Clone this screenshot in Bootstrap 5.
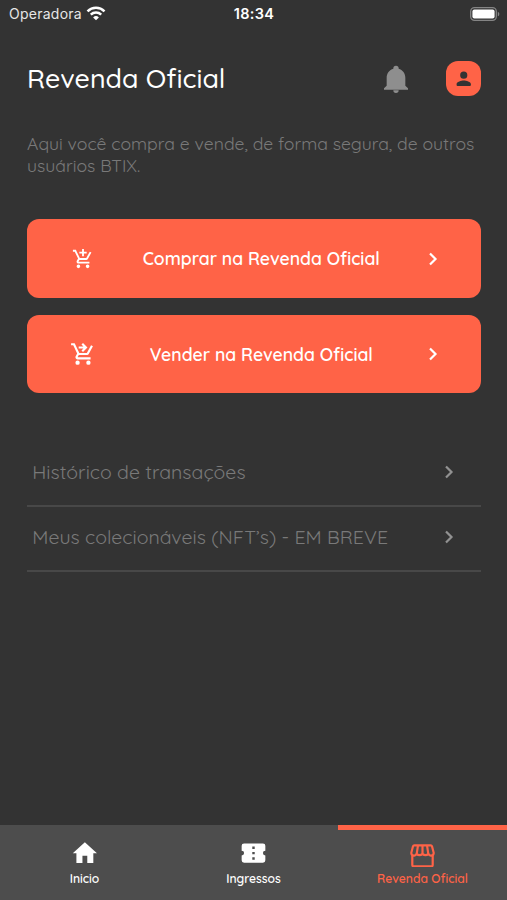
<!DOCTYPE html>
<html lang="pt-BR" data-bs-theme="dark">
<head>
<meta charset="utf-8">
<meta name="viewport" content="width=device-width, initial-scale=1">
<title>Revenda Oficial</title>
<link href="https://cdn.jsdelivr.net/npm/bootstrap@5.3.0/dist/css/bootstrap.min.css" rel="stylesheet">
<style>
  :root { --coral: #ff6347; --ink: #333333; }
  body { background: var(--ink); font-family: Quicksand, Lato, sans-serif; color: #fff; }
  svg { display: block; flex: none; }
  .app { height: 900px; overflow: hidden; }
  .status { display: grid; grid-template-columns: 1fr auto 1fr; height: 27px; padding: 0 7px 0 9px; font-family: Inter, sans-serif; font-size: 14px; color: #e6e6e6; }
  .status .carrier { letter-spacing: .25px; }
  .status .clock { font-size: 14.5px; font-weight: 600; color: #fff; letter-spacing: .3px; margin-right: 1px; }
  .head { padding: 34px 26px 0 27px; height: 69px; }
  .head h1 { font-size: 26.8px; font-weight: 550; line-height: 35px; }
  .bell { width: 32px; height: 32px; margin-right: 34px; }
  .avatar { width: 35px; height: 35px; border-radius: 12px; background: var(--coral); }
  .intro { margin: 36px 20px 0 27px; font-size: 17.6px; line-height: 22px; color: #797979; }
  .actions { margin: 43.4px 26px 0 27px; gap: 17px; }
  .action { height: 78.5px; border-radius: 12px; padding: 0 42px 0 42.5px; background: var(--coral) !important; border: 0; color: #fff; font-size: 17.55px; font-weight: 600; }
  .slot { width: 26px; }
  .links { margin: 48.600px 26px 0 27px; }
  .links .list-group-item { height: 65px; background: none; color: #797979; border-color: #484848; border-width: 0 0 2px !important; padding: 0 22.500px 3.500px 5.300px; font-size: 19.55px; }
  .tabs { height: 75px; background: #4d4d4d; font-size: 12.1px; font-weight: 600; }
  .tab { border-top: 5px solid transparent; color: #fff; text-decoration: none; padding: 8px 0 0; line-height: 16px; gap: 4px; }
  .tab.active { border-color: var(--coral); color: var(--coral); }
</style>
</head>
<body>
<div class="app d-flex flex-column">
  <div class="status align-items-center">
    <div class="d-flex align-items-center gap-1">
      <span class="carrier">Operadora</span>
      <svg width="20" height="15" viewBox="0 0 20 15" fill="none" stroke="#fff" stroke-width="2.5"><path d="M1.500 5.300a12.200 12.200 0 0 1 17 0M4.800 8.700a7.500 7.500 0 0 1 10.400 0"/><path d="M10 14.200 7.100 11.400a4.200 4.200 0 0 1 5.800 0z" fill="#fff" stroke="none"/></svg>
    </div>
    <span class="clock">18:34</span>
    <svg class="ms-auto" width="30" height="14" viewBox="0 0 30 14"><rect x=".7" y=".7" width="25.6" height="12.6" rx="3.8" fill="none" stroke="#858585" stroke-width="1.3"/><rect x="2.4" y="2.4" width="22.2" height="9.2" rx="2" fill="#fff"/><path d="M27.8 4.7c2 .8 2 3.8 0 4.6z" fill="#858585"/></svg>
  </div>

  <header class="head d-flex align-items-center">
    <h1 class="mb-0 me-auto">Revenda Oficial</h1>
    <svg class="bell" viewBox="0 0 24 24" fill="#8e8e8e"><path d="M21 19v1H3v-1l2-2v-6c0-3.1 2.03-5.83 5-6.71V4a2 2 0 0 1 4 0v.29c2.97.88 5 3.61 5 6.71v6l2 2m-7 1.500a2 2 0 0 1-4 0"/></svg>
    <div class="avatar d-flex align-items-center justify-content-center">
      <svg width="21.5" height="21.5" viewBox="0 0 24 24" fill="#333"><path d="M12 12a4 4 0 1 0 0-8 4 4 0 0 0 0 8zm0 2c-2.67 0-8 1.34-8 4v1c0 .55.45 1 1 1h14c.55 0 1-.45 1-1v-1c0-2.66-5.33-4-8-4z"/></svg>
    </div>
  </header>

  <p class="intro">Aqui você compra e vende, de forma segura, de outros usuários BTIX.</p>

  <div class="actions d-flex flex-column">
    <button class="action btn d-flex align-items-center justify-content-between">
      <span class="slot d-flex justify-content-center"><svg width="22" height="22" viewBox="0 0 24 24" fill="#fff"><path d="M11 9h2V6h3V4h-3V1h-2v3H8v2h3v3zm-4 9a2 2 0 1 0 0 4 2 2 0 0 0 0-4zm10 0a2 2 0 1 0 0 4 2 2 0 0 0 0-4zm-9.83-3.25.03-.12.9-1.63h7.45c.75 0 1.41-.41 1.75-1.03l3.86-7.01L19.42 4l-1.11 2-2.76 5H8.53l-.13-.27L6.16 6l-.95-2-.94-2H1v2h2l3.6 7.59-1.35 2.45c-.16.28-.25.61-.25.96 0 1.1.9 2 2 2h12v-2H7.42a.25.25 0 0 1-.25-.25z"/></svg></span>
      <span>Comprar na Revenda Oficial</span>
      <svg width="12" height="16" viewBox="0 0 12 16" fill="none" stroke="#fff" stroke-width="2.2"><path d="m3 2.500 5.500 5.500L3 13.500"/></svg>
    </button>
    <button class="action btn d-flex align-items-center justify-content-between">
      <span class="slot"><svg width="26" height="26" viewBox="0 0 24 24" fill="#fff"><path d="M7 18a2 2 0 1 0 0 4 2 2 0 0 0 0-4zm10 0a2 2 0 1 0 0 4 2 2 0 0 0 0-4zm-9.83-3.25.03-.12.9-1.63h7.45c.75 0 1.41-.41 1.75-1.03l3.86-7.01L19.42 4l-1.11 2-2.76 5H8.53l-.13-.27L6.16 6l-.95-2-.94-2H1v2h2l3.600 7.59-1.35 2.45c-.16.28-.25.61-.25.96 0 1.1.9 2 2 2h12v-2H7.42a.25.25 0 0 1-.25-.25z"/><path d="M8 6h6.500M11.300 2.600 14.700 6l-3.400 3.400" fill="none" stroke="#fff" stroke-width="2"/></svg></span>
      <span>Vender na Revenda Oficial</span>
      <svg width="12" height="16" viewBox="0 0 12 16" fill="none" stroke="#fff" stroke-width="2.2"><path d="m3 2.500 5.500 5.500L3 13.500"/></svg>
    </button>
  </div>

  <div class="links list-group list-group-flush">
    <a class="list-group-item d-flex align-items-center justify-content-between" href="#"><span>Histórico de transações</span>
      <svg width="20" height="16" viewBox="0 0 20 16" fill="none" stroke="#929292" stroke-width="2.2"><path d="m7 2.500 5.500 5.500-5.500 5.500"/></svg></a>
    <a class="list-group-item d-flex align-items-center justify-content-between" href="#"><span>Meus colecionáveis (NFT’s) - EM BREVE</span>
      <svg width="20" height="16" viewBox="0 0 20 16" fill="none" stroke="#929292" stroke-width="2.2"><path d="m7 2.500 5.500 5.500-5.500 5.500"/></svg></a>
  </div>

  <nav class="tabs d-flex flex-shrink-0 mt-auto">
    <a class="tab col-4 d-flex flex-column align-items-center" href="#">
      <svg width="29" height="29" viewBox="0 0 24 24" fill="#fff"><path d="M10.300 20.700v-6h4v6h5v-8h3L12.300 3.500 2.300 12.700h3v8z"/></svg><span>Inicio</span></a>
    <a class="tab col-4 d-flex flex-column align-items-center" href="#">
      <svg width="29" height="29" viewBox="0 0 24 24" fill="#fff"><path d="M21.800 10.500v-4a2 2 0 0 0-2-2H4.200a2 2 0 0 0-2 2v4a2 2 0 0 1 0 4v4a2 2 0 0 0 2 2h15.600a2 2 0 0 0 2-2v-4a2 2 0 0 1 0-4zm-8.800 7.500h-2v-2h2v2zm0-4.500h-2v-2h2v2zm0-4.500h-2V7h2v2z"/></svg><span>Ingressos</span></a>
    <a class="tab active col-4 d-flex flex-column align-items-center" href="#">
      <svg width="29" height="29" viewBox="0 0 29 29" fill="none" stroke="#ff6347" stroke-width="2.2"><path d="M4.300 17.500V27a1.300 1.300 0 0 0 1.300 1.300h17.800a1.300 1.300 0 0 0 1.300-1.300v-9.500M6.300 7.300h16.400q1 0 1.300 1l1.700 6.500a2.700 2.700 0 0 1-5.200 1.100q-3 2.600-6 0-3 2.600-6 0a2.700 2.700 0 0 1-5.200-1.100L5 8.300q.3-1 1.300-1zM10 7.300l-1.300 8.500M14.500 7.300v8.500M19 7.300l1.300 8.500"/></svg><span>Revenda Oficial</span></a>
  </nav>
</div>
<script src="https://cdn.jsdelivr.net/npm/bootstrap@5.3.0/dist/js/bootstrap.bundle.min.js"></script>
</body>
</html>
